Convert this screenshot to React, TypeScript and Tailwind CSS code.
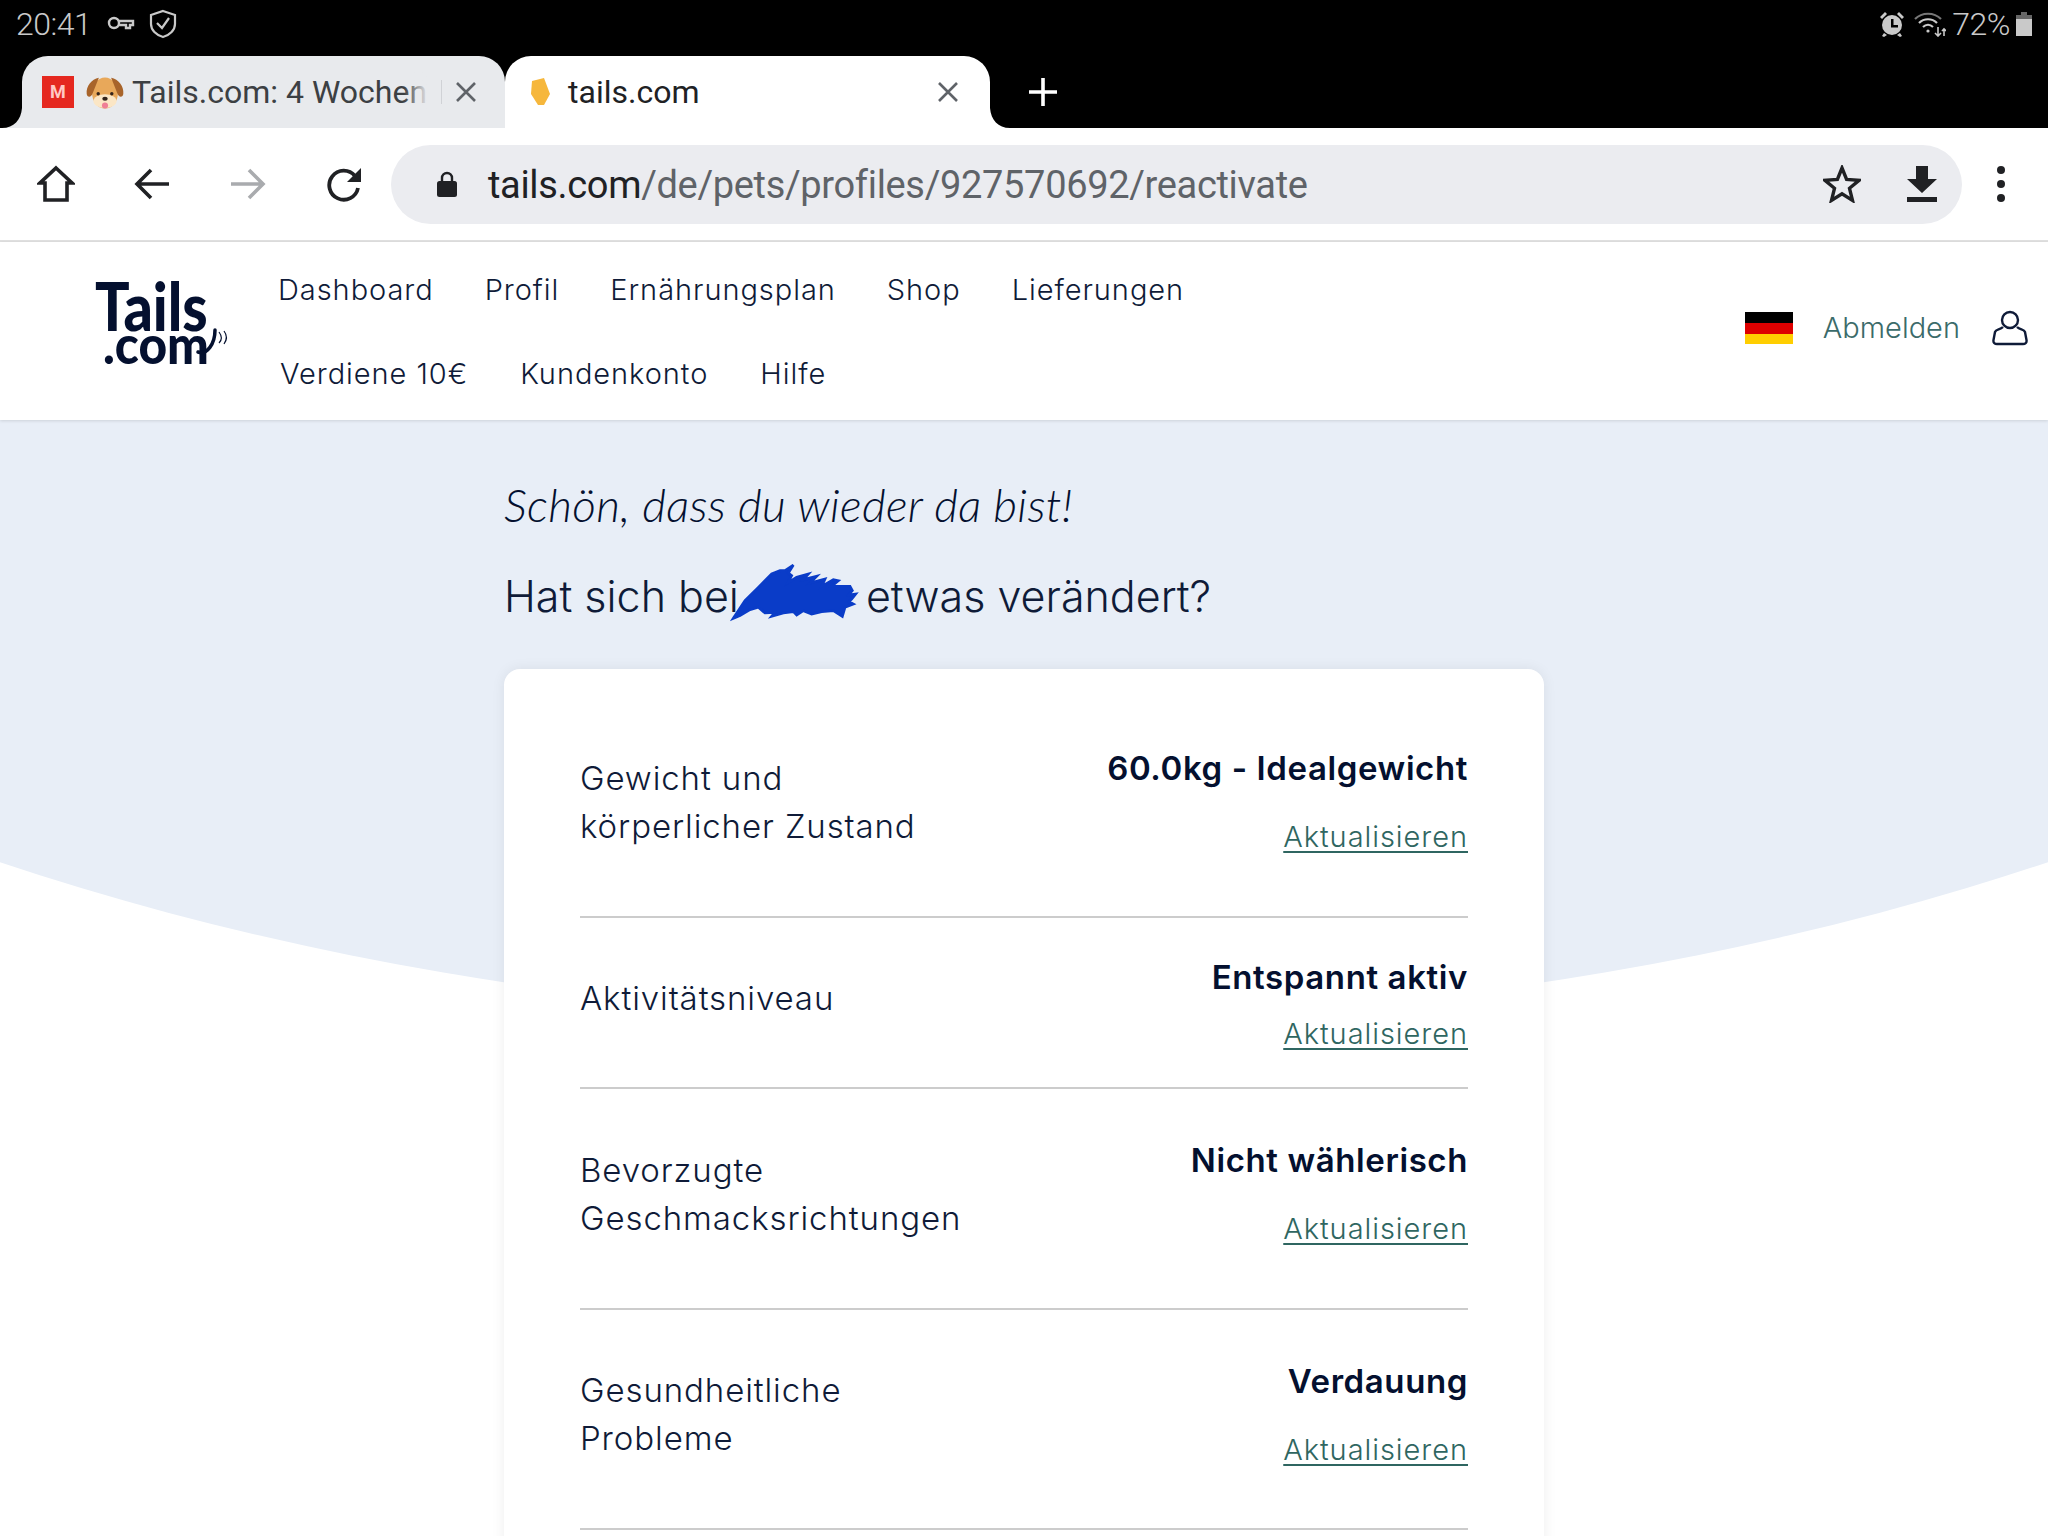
const navTop = ["Dashboard", "Profil", "Ernährungsplan", "Shop", "Lieferungen"];
const navBottom = ["Verdiene 10€", "Kundenkonto", "Hilfe"];

const rows = [
  { label: ["Gewicht und", "körperlicher Zustand"], value: "60.0kg - Idealgewicht", h: "h-[221px]", gap: "gap-[33px] pb-[8px]" },
  { label: ["Aktivitätsniveau"], value: "Entspannt aktiv", h: "h-[171px]", gap: "gap-[21px] pt-[6px]" },
  { label: ["Bevorzugte", "Geschmacksrichtungen"], value: "Nicht wählerisch", h: "h-[221px]", gap: "gap-[33px] pb-[8px]" },
  { label: ["Gesundheitliche", "Probleme"], value: "Verdauung", h: "h-[220px]", gap: "gap-[33px] pb-[8px]" },
];

const Flare = ({ side, color }: { side: "left" | "right"; color: string }) => (
  <svg
    width="20"
    height="20"
    viewBox="0 0 20 20"
    className={side === "left" ? "absolute bottom-0 -left-[20px]" : "absolute bottom-0 -right-[20px]"}
  >
    {side === "left" ? <path d="M20 0V20H0C12 20 19 12 20 0Z" fill={color} /> : <path d="M0 0V20H20C8 20 1 12 0 0Z" fill={color} />}
  </svg>
);

const StatusBar = () => (
  <div className="flex h-[56px] items-start justify-between px-[16px] pt-[6px] text-[#c9c9c9]">
    <div className="flex items-center gap-[16px]">
      <span className="text-[32px] leading-[36px] font-light tracking-[-0.5px]">20:41</span>
      <svg width="28" height="16" viewBox="0 0 28 16" fill="none" stroke="#c9c9c9" strokeWidth="2.4">
        <circle cx="7" cy="7" r="5" />
        <path d="M12 5H26V9H23V12H19V9H12" />
      </svg>
      <svg width="30" height="30" viewBox="0 0 30 30" fill="none" stroke="#c9c9c9" strokeWidth="2.2" className="-ml-[3px]">
        <path d="M15 2L27 6V15C27 21 22 26 15 28C8 26 3 21 3 15V6Z" />
        <path d="M9 14L14 19L21 9" />
      </svg>
    </div>
    <div className="flex items-center gap-[6px]">
      <svg width="26" height="26" viewBox="0 0 26 26" fill="#c9c9c9" className="mr-[3px]">
        <circle cx="13" cy="14" r="10" />
        <path d="M12 8H14.5V14H19V16.5H12Z" fill="#000" />
        <path d="M1 6L6 1L8 3L3 8ZM25 6L20 1L18 3L23 8ZM5 22L8 24L5 26L3 25ZM21 22L18 24L21 26L23 25Z" />
      </svg>
      <svg width="32" height="26" viewBox="0 0 32 26" fill="none" stroke="#c9c9c9" strokeWidth="2.2">
        <path d="M1 8C8 1 20 1 27 8" stroke="#777" />
        <path d="M5 12C10 7 18 7 23 12" />
        <path d="M9 16C12 13 16 13 19 16" />
        <circle cx="14" cy="20" r="1.6" fill="#c9c9c9" stroke="none" />
        <path d="M24 16V25M21 22L24 25L27 22" strokeWidth="1.6" />
        <path d="M30 25V18M28 20L30 18L32 20" strokeWidth="1.6" />
      </svg>
      <span className="text-[32px] leading-[36px] font-light tracking-[-0.5px]">72%</span>
      <svg width="16" height="24" viewBox="0 0 16 24">
        <path d="M5 0H11V3H16V7H0V3H5Z" fill="#666" />
        <rect x="0" y="7" width="16" height="17" fill="#c9c9c9" />
      </svg>
    </div>
  </div>
);

const TabStrip = () => (
  <div className="flex h-[72px] items-stretch pl-[22px]">
    <div className="relative flex w-[483px] items-center rounded-t-[26px] bg-[#e8eaed] pl-[20px]">
      <Flare side="left" color="#e8eaed" />
      <div className="flex h-[32px] w-[32px] items-center justify-center bg-[#e5281f] text-[18px] leading-none font-bold text-[#ffc9c4]">M</div>
      <svg width="38" height="33" viewBox="0 0 112 97" className="ml-[12px] shrink-0">
        <ellipse cx="56" cy="50" rx="38" ry="46" fill="#e8a85a" />
        <path d="M38 5C16 9 0 30 2 52C3 63 15 65 20 50L32 20Z" fill="#a8642a" />
        <path d="M74 5C96 9 112 30 110 52C109 63 97 65 92 50L80 20Z" fill="#a8642a" />
        <ellipse cx="56" cy="74" rx="34" ry="20" fill="#fbe6c5" />
        <circle cx="36" cy="52" r="5" fill="#33231a" />
        <circle cx="76" cy="52" r="5" fill="#33231a" />
        <ellipse cx="56" cy="67" rx="8" ry="6" fill="#33231a" />
        <ellipse cx="56" cy="87" rx="9" ry="9" fill="#ef7f95" />
      </svg>
      <div className="relative ml-[8px] w-[296px] overflow-hidden text-[32px] leading-[40px] whitespace-nowrap text-[#3c4043]">
        Tails.com: 4 Wochen
        <div className="absolute top-0 right-0 h-full w-[24px] bg-gradient-to-r from-transparent to-[#e8eaed]"></div>
      </div>
      <div className="ml-[13px] h-[24px] w-px bg-[#d0d2d6]"></div>
      <svg width="22" height="22" viewBox="0 0 22 22" stroke="#5f6368" strokeWidth="2.6" className="ml-[13px]">
        <path d="M2 2L20 20M20 2L2 20" />
      </svg>
    </div>
    <div className="relative flex w-[485px] items-center rounded-t-[26px] bg-white pl-[24px]">
      <Flare side="right" color="#ffffff" />
      <svg width="22" height="28" viewBox="0 0 22 28" className="shrink-0">
        <path d="M3 3L15 0L21 16L15 27H9L2 16Z" fill="#f6b73c" />
      </svg>
      <span className="ml-[17px] text-[32px] leading-[40px] text-[#202124]">tails.com</span>
      <svg width="22" height="22" viewBox="0 0 22 22" stroke="#5f6368" strokeWidth="2.6" className="ml-auto mr-[31px]">
        <path d="M2 2L20 20M20 2L2 20" />
      </svg>
    </div>
    <svg width="30" height="30" viewBox="0 0 30 30" stroke="#fff" strokeWidth="3.6" className="ml-[38px] mt-[21px]">
      <path d="M15 1V29M1 15H29" />
    </svg>
  </div>
);

const Toolbar = () => (
  <div className="flex h-[114px] items-center border-b-2 border-[#e0e0e0] bg-white">
    <svg width="38" height="38" viewBox="0 0 38 38" fill="none" stroke="#202124" strokeWidth="3.6" className="ml-[37px]">
      <path d="M19 3L35 18H30V35H8V18H3Z" />
    </svg>
    <svg width="36" height="36" viewBox="0 0 36 36" fill="none" stroke="#202124" strokeWidth="3.6" className="ml-[59px]">
      <path d="M35 18H4M17 4L3 18L17 32" />
    </svg>
    <svg width="36" height="36" viewBox="0 0 36 36" fill="none" stroke="#a9abae" strokeWidth="3.6" className="ml-[60px]">
      <path d="M1 18H32M19 4L33 18L19 32" />
    </svg>
    <svg width="36" height="36" viewBox="0 0 36 36" fill="none" className="ml-[60px]">
      <path d="M29 10A14.5 14.5 0 1 0 32 22" stroke="#202124" strokeWidth="3.8" />
      <path d="M35 2V16H21Z" fill="#202124" />
    </svg>
    <div className="ml-[29px] flex h-[79px] w-[1571px] items-center rounded-full bg-[#ebecf0]">
      <svg width="20" height="26" viewBox="0 0 20 26" className="ml-[46px]">
        <path d="M5 11V7A5 5 0 0 1 15 7V11" fill="none" stroke="#202124" strokeWidth="2.4" />
        <rect x="0" y="10" width="20" height="16" rx="2.5" fill="#202124" />
      </svg>
      <span className="ml-[31px] mt-[2px] text-[38px] leading-[48px] tracking-[-0.33px] text-[#202124]">
        tails.com<span className="text-[#5f6368]">/de/pets/profiles/927570692/reactivate</span>
      </span>
      <svg width="38" height="38" viewBox="0 0 38 38" fill="none" stroke="#202124" strokeWidth="3.4" className="ml-auto">
        <path d="M19 3L23.6 14.5L36 15.4L26.5 23.3L29.5 35.4L19 28.8L8.5 35.4L11.5 23.3L2 15.4L14.4 14.5Z" />
      </svg>
      <svg width="30" height="36" viewBox="0 0 30 36" fill="#202124" className="ml-[46px] mr-[25px]">
        <path d="M9 0H21V13H30L15 27L0 13H9Z" />
        <rect x="0" y="31" width="30" height="5" />
      </svg>
    </div>
    <div className="ml-[35px] flex flex-col gap-[6px]">
      <div className="h-[8px] w-[8px] rounded-full bg-[#202124]"></div>
      <div className="h-[8px] w-[8px] rounded-full bg-[#202124]"></div>
      <div className="h-[8px] w-[8px] rounded-full bg-[#202124]"></div>
    </div>
  </div>
);

const Logo = () => (
  <div className="relative mb-[22px] ml-[95px] flex w-[130px] flex-col items-start font-['Lato',sans-serif] font-black text-[#04102f]">
    <div className="origin-left scale-x-[0.87] text-[66px] leading-[48px]">Tails</div>
    <div className="ml-[8px] origin-left scale-x-[0.92] text-[54px] leading-[28px]">.com</div>
    <svg width="36" height="40" viewBox="0 0 36 40" fill="none" stroke="#04102f" className="absolute top-[40px] left-[100px]">
      <path d="M3 30C12 33 20 22 20 8" strokeWidth="3.5" strokeLinecap="round" />
      <path d="M24 10C27 14 27 18 24 21" strokeWidth="1.2" />
      <path d="M29 9C32 13 32 18 29 22" strokeWidth="1.2" />
    </svg>
  </div>
);

const Header = () => (
  <header className="relative z-10 flex h-[178px] items-center bg-white font-['Inter',sans-serif] shadow-[0_1px_3px_rgba(0,0,0,0.12)]">
    <Logo />
    <nav className="mt-[2px] ml-[53px] flex flex-col gap-[48px] text-[29px] leading-[36px] font-light tracking-[0.95px] text-[#0f1b38]">
      <div className="flex gap-[51px]">
        {navTop.map((item) => (
          <span key={item}>{item}</span>
        ))}
      </div>
      <div className="flex gap-[52px] pl-[2px]">
        {navBottom.map((item) => (
          <span key={item}>{item}</span>
        ))}
      </div>
    </nav>
    <div className="ml-auto flex items-center pr-[20px] pb-[6px]">
      <div className="flex h-[32px] w-[48px] flex-col">
        <div className="h-[11px] bg-black"></div>
        <div className="h-[11px] bg-[#dd0000]"></div>
        <div className="h-[10px] bg-[#ffce00]"></div>
      </div>
      <span className="ml-[30px] text-[29px] leading-[36px] font-light text-[#3b6b6a]">Abmelden</span>
      <svg width="36" height="36" viewBox="0 0 36 36" fill="none" stroke="#0f1b38" strokeWidth="2.4" className="ml-[32px]">
        <circle cx="18" cy="10" r="8" />
        <path d="M11 17C8 20 4 19 3 22L1.5 30C1 33 3 34 5 34H31C33 34 35 33 34.5 30L33 22C32 19 28 20 25 17" />
      </svg>
    </div>
  </header>
);

const Row = ({ row }: { row: (typeof rows)[number] }) => (
  <div className={`flex items-center justify-between border-b-2 border-[#cccccc] ${row.h}`}>
    <div className="pb-[10px] text-[33px] leading-[48px] font-light tracking-[0.9px] text-[#0f1b38]">
      {row.label.map((line) => (
        <div key={line}>{line}</div>
      ))}
    </div>
    <div className={`flex flex-col items-end ${row.gap}`}>
      <span className="text-[33px] leading-[36px] font-semibold tracking-[0.6px] text-[#04102f]">{row.value}</span>
      <a className="text-[29px] leading-[36px] font-light tracking-[0.95px] text-[#2f6661] underline underline-offset-[4px]">Aktualisieren</a>
    </div>
  </div>
);

export default function App() {
  return (
    <div className="h-[1536px] w-[2048px] overflow-hidden bg-black font-['Roboto',sans-serif]">
      <StatusBar />
      <TabStrip />
      <Toolbar />
      <Header />
      <main className="relative h-[1116px] overflow-hidden bg-white font-['Inter',sans-serif]">
        {/* curved background */}
        <div className="absolute top-[-1651px] left-[-976px] h-[2252px] w-[4000px] rounded-[50%] bg-[#e8eef7]"></div>
        <div className="relative mx-auto w-[1040px]">
          <h1 className="pt-[57px] font-['Lato',sans-serif] text-[46px] leading-[56px] font-light tracking-[0.3px] text-[#04102f] italic">
            Schön, dass du wieder da bist!
          </h1>
          <div className="relative mt-[39px] flex text-[43px] leading-[48px] font-light text-[#0f1b38]">
            <span>Hat sich bei</span>
            <span className="ml-[127px]">etwas verändert?</span>
            <svg width="140" height="70" viewBox="0 0 420 210" className="absolute top-[-13px] left-[221px]">
              <path
                d="M25 178L60 125L100 85L140 45L165 35L180 35L205 18L190 42L200 50L188 72L215 55L250 45L235 62L275 52L255 72L300 60L290 82L325 62L340 65L320 82L375 82L382 95L370 108L392 105L380 120L372 128L385 135L360 145L352 172L325 155L290 158L260 165L235 155L215 168L205 158L175 162L140 172L150 160L120 162L100 145L75 152L45 170Z"
                fill="#0a3cc8"
                stroke="#0a3cc8"
                strokeWidth="8"
              />
            </svg>
          </div>
          <section className="mt-[49px] h-[900px] rounded-[16px] bg-white px-[76px] pt-[28px] shadow-[0_0_14px_rgba(0,0,0,0.07)]">
            {rows.map((row) => (
              <Row key={row.value} row={row} />
            ))}
          </section>
        </div>
      </main>
    </div>
  );
}
